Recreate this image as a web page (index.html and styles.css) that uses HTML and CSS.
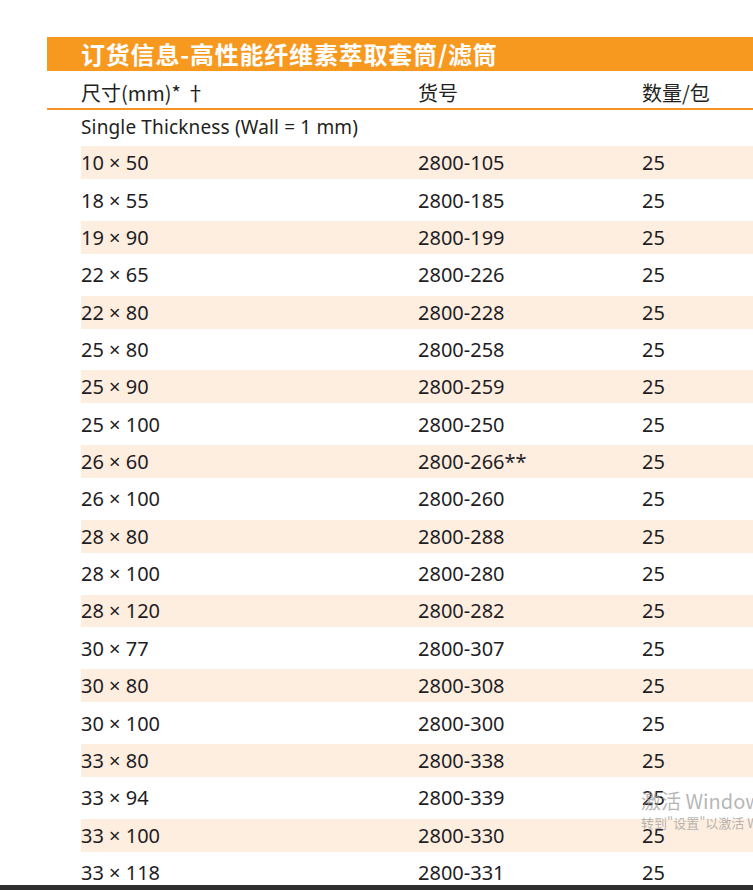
FILE: index.html
```html
<!DOCTYPE html>
<html lang="zh-CN">
<head>
<meta charset="utf-8">
<title>订货信息</title>
<link rel="stylesheet" href="styles.css">
</head>
<body>
<div class="sheet">
  <div class="title">订货信息-高性能纤维素萃取套筒/滤筒</div>
  <div class="row head">
    <span>尺寸(mm)* †</span><span>货号</span><span>数量/包</span>
  </div>
  <div class="row sub"><span class="subtext">Single Thickness (Wall = 1 mm)</span></div>
  <div class="row d alt"><span>10 × 50</span><span>2800-105</span><span>25</span></div>
  <div class="row d"><span>18 × 55</span><span>2800-185</span><span>25</span></div>
  <div class="row d alt"><span>19 × 90</span><span>2800-199</span><span>25</span></div>
  <div class="row d"><span>22 × 65</span><span>2800-226</span><span>25</span></div>
  <div class="row d alt"><span>22 × 80</span><span>2800-228</span><span>25</span></div>
  <div class="row d"><span>25 × 80</span><span>2800-258</span><span>25</span></div>
  <div class="row d alt"><span>25 × 90</span><span>2800-259</span><span>25</span></div>
  <div class="row d"><span>25 × 100</span><span>2800-250</span><span>25</span></div>
  <div class="row d alt"><span>26 × 60</span><span>2800-266**</span><span>25</span></div>
  <div class="row d"><span>26 × 100</span><span>2800-260</span><span>25</span></div>
  <div class="row d alt"><span>28 × 80</span><span>2800-288</span><span>25</span></div>
  <div class="row d"><span>28 × 100</span><span>2800-280</span><span>25</span></div>
  <div class="row d alt"><span>28 × 120</span><span>2800-282</span><span>25</span></div>
  <div class="row d"><span>30 × 77</span><span>2800-307</span><span>25</span></div>
  <div class="row d alt"><span>30 × 80</span><span>2800-308</span><span>25</span></div>
  <div class="row d"><span>30 × 100</span><span>2800-300</span><span>25</span></div>
  <div class="row d alt"><span>33 × 80</span><span>2800-338</span><span>25</span></div>
  <div class="row d"><span>33 × 94</span><span>2800-339</span><span>25</span></div>
  <div class="row d alt"><span>33 × 100</span><span>2800-330</span><span>25</span></div>
  <div class="row d"><span>33 × 118</span><span>2800-331</span><span>25</span></div>
</div>
<div class="watermark">
  <div class="wm1">激活 Windows</div>
  <div class="wm2">转到"设置"以激活 Windows。</div>
</div>
<div class="taskbar"></div>
</body>
</html>
```

FILE: styles.css
```css
html, body {
  margin: 0;
  padding: 0;
  background: #ffffff;
  overflow: hidden;
  height: 890px;
}
body {
  font-family: "Noto Sans", "Noto Sans CJK SC", sans-serif;
  color: #1f1d24;
}
.sheet {
  margin: 37px 0 0 47px;
  width: 706px;
}
.title {
  height: 34px;
  background: #f8991f;
  color: #ffffff;
  font-family: "Noto Sans CJK SC", sans-serif;
  font-weight: 700;
  font-size: 24px;
  line-height: 34px;
  padding-left: 34px;
  white-space: nowrap;
  letter-spacing: 0.8px;
}
.row {
  display: grid;
  grid-template-columns: 337px 224px 1fr;
  padding-left: 34px;
  align-items: center;
  box-sizing: border-box;
  white-space: nowrap;
}
.head {
  height: 39px;
  border-bottom: 2px solid #f39322;
  font-family: "Noto Sans CJK SC", sans-serif;
  font-size: 20px;
  color: #231f20;
  padding-top: 6px;
}
.sub {
  height: 34px;
  font-size: 19px;
  color: #231f20;
}
.subtext {
  font-family: "Noto Sans", sans-serif;
  letter-spacing: 0.15px;
}
.d {
  height: 37.37px;
  font-size: 20px;
  padding-top: 2.2px;
  padding-bottom: 2.2px;
}
.alt {
  background: #fdeee0;
  background-clip: content-box;
}
.watermark {
  position: absolute;
  left: 641px;
  top: 788px;
  color: rgba(150, 150, 150, 0.7);
  white-space: nowrap;
  font-family: "Noto Sans CJK SC", sans-serif;
}
.wm1 {
  font-size: 20px;
  line-height: 26px;
}
.wm2 {
  font-size: 13px;
  line-height: 18px;
}
.taskbar {
  position: absolute;
  left: 0;
  top: 885px;
  width: 753px;
  height: 5px;
  background: #2e2e2e;
}
```
